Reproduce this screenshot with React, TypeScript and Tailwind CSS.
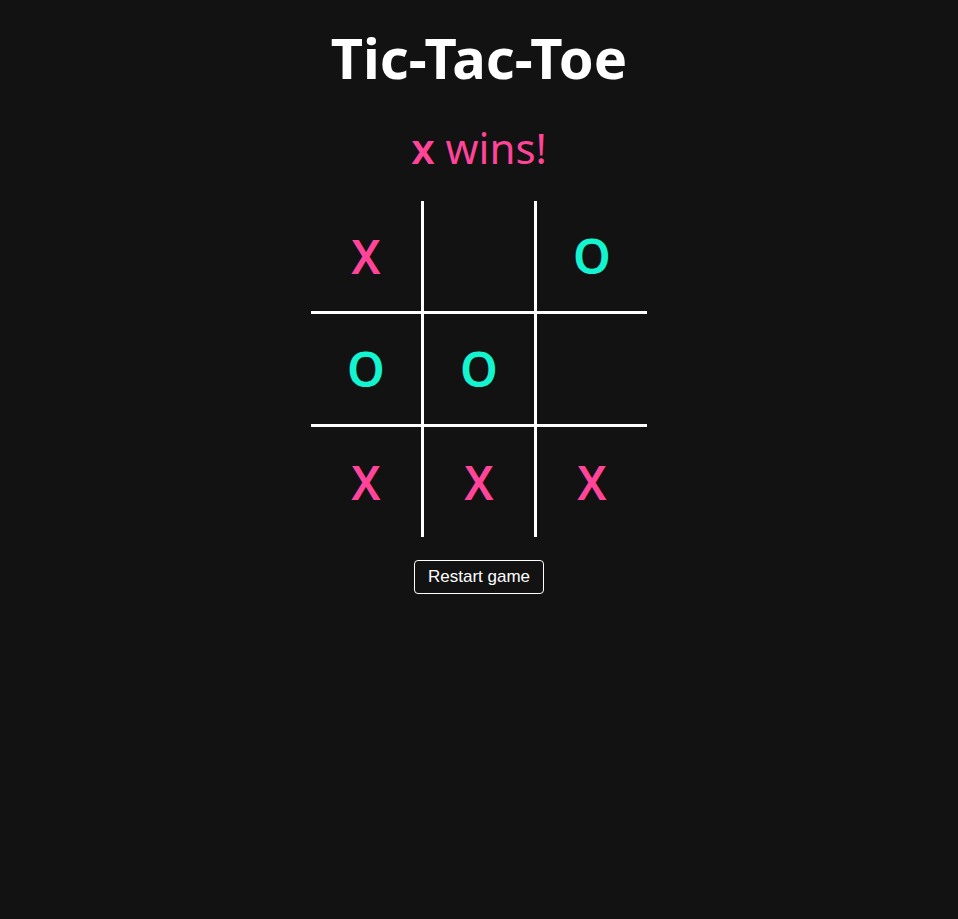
import { useState } from 'react'

type Mark = 'X' | 'O' | null

const initialBoard: Mark[] = ['X', null, 'O', 'O', 'O', null, 'X', 'X', 'X']

function Cell({ value, index }: { value: Mark; index: number }) {
  const col = index % 3
  const row = Math.floor(index / 3)
  const borders = [
    col < 2 ? 'border-r-[3px]' : '',
    row < 2 ? 'border-b-[3px]' : '',
  ].join(' ')
  return (
    <div className={`flex items-center justify-center border-white ${borders}`}>
      {value === 'X' && <span className="text-[46px] leading-none text-[#ff4499] font-semibold">X</span>}
      {value === 'O' && <span className="text-[48px] leading-none text-[#12f5d0] font-semibold">O</span>}
    </div>
  )
}

export default function App() {
  const [board, setBoard] = useState<Mark[]>(initialBoard)

  return (
    <div
      className="min-h-screen bg-[#121212] flex flex-col items-center text-white"
      style={{ fontFamily: '"Noto Sans", "Open Sans", sans-serif' }}
    >
      <h1 className="mt-[24px] text-[56px] font-bold leading-[1.2]">Tic-Tac-Toe</h1>
      <p className="mt-[32px] text-[42px] leading-[1.2] text-[#ff4499]">
        <span className="font-semibold">x</span> wins!
      </p>
      <div className="mt-[27px] grid grid-cols-[113px_113px_110px] grid-rows-[113px_113px_110px]">
        {board.map((v, i) => (
          <Cell key={i} value={v} index={i} />
        ))}
      </div>
      <button
        onClick={() => setBoard(Array(9).fill(null))}
        className="mt-[23px] h-[34px] px-[13px] border border-white rounded-[4px] bg-[#121212] text-[17px] text-white"
        style={{ fontFamily: '"Liberation Sans", Arial, sans-serif' }}
      >
        Restart game
      </button>
    </div>
  )
}
